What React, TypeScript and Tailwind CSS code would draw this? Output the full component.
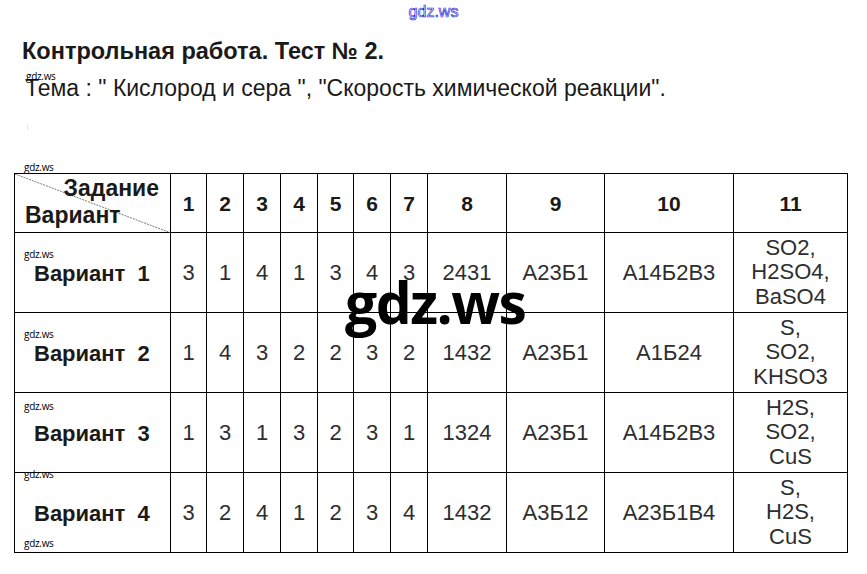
import React from "react";

const rows: { name: string; vals: string[]; last: string[] }[] = [
  { name: "1", vals: ["3", "1", "4", "1", "3", "4", "3", "2431", "А23Б1", "А14Б2В3"], last: ["SO2,", "H2SO4,", "BaSO4"] },
  { name: "2", vals: ["1", "4", "3", "2", "2", "3", "2", "1432", "А23Б1", "А1Б24"], last: ["S,", "SO2,", "KHSO3"] },
  { name: "3", vals: ["1", "3", "1", "3", "2", "3", "1", "1324", "А23Б1", "А14Б2В3"], last: ["H2S,", "SO2,", "CuS"] },
  { name: "4", vals: ["3", "2", "4", "1", "2", "3", "4", "1432", "А3Б12", "А23Б1В4"], last: ["S,", "H2S,", "CuS"] },
];

const markTops = ["top-[16px]", "top-[16px]", "top-[8px]", "-top-[4px]"];

const Mark = ({ className }: { className: string }) => (
  <span
    className={`absolute text-[10px] leading-none text-black tracking-[-0.3px] ${className}`}
    style={{ fontFamily: '"Open Sans", sans-serif' }}
  >
    gdz.ws
  </span>
);

const cell = "border-r border-b border-black flex items-center justify-center";

export default function App() {
  return (
    <div
      className="relative w-[867px] h-[574px] bg-white overflow-hidden"
      style={{ fontFamily: '"Liberation Sans", Arial, sans-serif' }}
    >
      <div className="flex flex-col">
        <div className="h-[24px] pt-[3px] text-center text-[16px] leading-[18px] text-white [-webkit-text-stroke:0.7px_#2b2bd6]">
          gdz.ws
        </div>
        <div className="pl-[22px] pt-[13px] h-[53px] text-[23.5px] leading-[28px] font-bold text-[#1a1a1a]">
          Контрольная работа. Тест № 2.
        </div>
        <div className="relative pl-[25px] h-[30px]">
          <Mark className="left-[26px] -top-[6px]" />
          <div className="text-[23px] leading-[26px] text-[#1a1a1a] -mt-[2px]">
            Тема : " Кислород и сера ", "Скорость химической реакции".
          </div>
        </div>
        <div className="pl-[27px] pt-[18px]">
          <div className="w-[1px] h-[5px] bg-[#d3e6f5]" />
        </div>
        <div className="relative pl-[14px] pt-[43px]">
          <Mark className="left-[24px] top-[32px]" />
          <div className="grid grid-cols-[156px_36px_37px_37px_37px_36px_37px_37px_79px_98px_129px_114px] grid-rows-[59px_80px_80px_80px_80px] w-[834px] border-l border-t border-black">
            <div className="relative border-r border-b border-black">
              <svg className="absolute left-0 top-0" width="156" height="59" viewBox="0 0 156 59">
                <line x1="0" y1="0" x2="156" y2="59" stroke="#555" strokeWidth="0.8" strokeDasharray="2 1" />
              </svg>
              <div className="relative flex flex-col text-[23px] font-bold leading-[27px] text-[#1a1a1a]">
                <span className="self-end pr-[11px] pt-[1px]">Задание</span>
                <span className="pl-[10px]">Вариант</span>
              </div>
            </div>
            {["1", "2", "3", "4", "5", "6", "7", "8", "9", "10", "11"].map((n) => (
              <div key={n} className={`${cell} text-[21px] font-bold leading-none text-[#1a1a1a] pt-[1px]`}>
                {n}
              </div>
            ))}
            {rows.map((r, ri) => (
              <React.Fragment key={r.name}>
                <div className="relative border-r border-b border-black flex items-center">
                  <Mark className={`left-[9px] ${markTops[ri]}`} />
                  {ri === 3 && <Mark className="left-[9px] top-[65px]" />}
                  <div className="pl-[19px] pt-[3px] text-[22px] leading-none font-bold text-[#1a1a1a] whitespace-pre">
                    {"Вариант  " + r.name}
                  </div>
                </div>
                {r.vals.map((v, i) => (
                  <div key={i} className={`${cell} text-[22px] leading-none text-[#2e2e2e] pt-[1px]`}>
                    {v}
                  </div>
                ))}
                <div className={`${cell} flex-col text-[22px] leading-[24.5px] text-[#2e2e2e]`}>
                  {r.last.map((l, i) => (
                    <div key={i}>{l}</div>
                  ))}
                </div>
              </React.Fragment>
            ))}
          </div>
        </div>
      </div>
      <div
        className="absolute left-[345px] top-[274px] text-[57px] font-bold leading-none text-black tracking-[-1.5px]"
        style={{ fontFamily: '"Open Sans", sans-serif' }}
      >
        gdz.ws
      </div>
    </div>
  );
}
